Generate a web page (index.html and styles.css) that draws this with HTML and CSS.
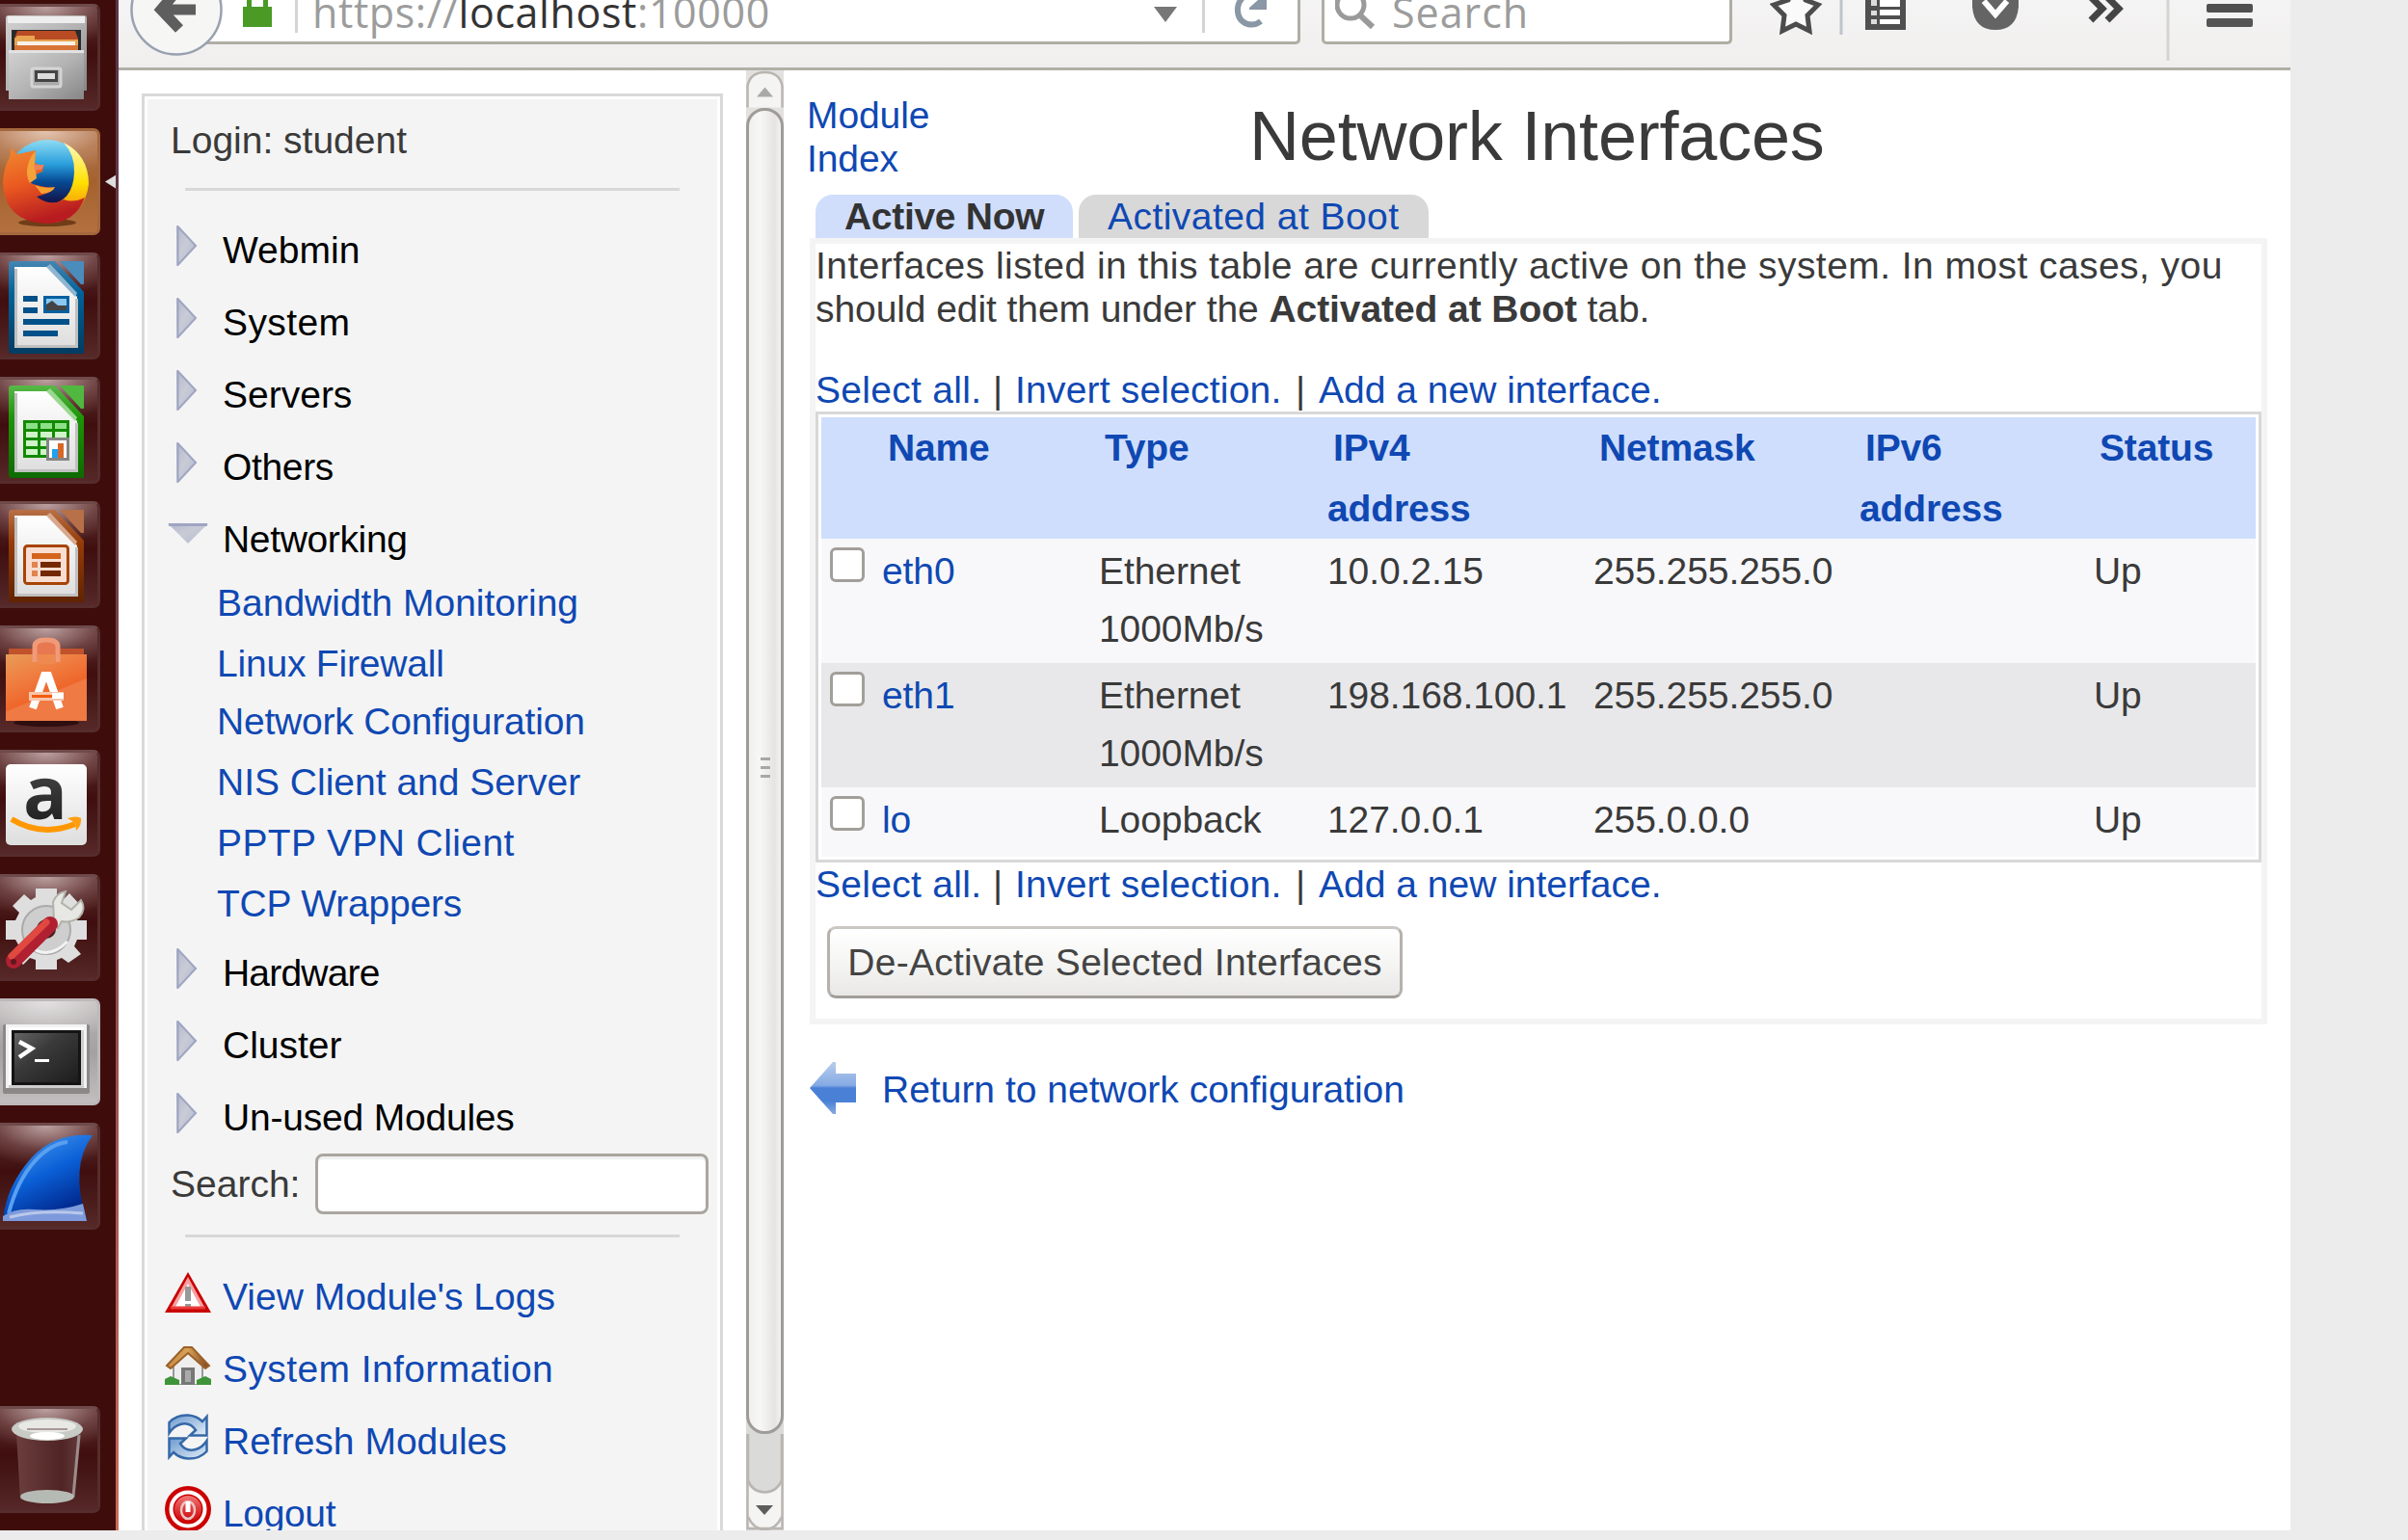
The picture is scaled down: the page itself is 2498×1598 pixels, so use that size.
FILE: index.html
```html
<!DOCTYPE html>
<html lang="en">
<head>
<meta charset="utf-8">
<title>Network Interfaces</title>
<link rel="stylesheet" href="styles.css">
</head>
<body>
<svg width="0" height="0" class="defs">
  <defs>
    <linearGradient id="metal" x1="0" y1="0" x2="1" y2="1"><stop offset="0" stop-color="#d2d2d2"/><stop offset=".5" stop-color="#b4b4b4"/><stop offset="1" stop-color="#868686"/></linearGradient>
    <linearGradient id="paper" x1="0" y1="0" x2="0" y2="1"><stop offset="0" stop-color="#fff"/><stop offset="1" stop-color="#dedede"/></linearGradient>
    <linearGradient id="blueDoc" x1="0" y1="0" x2="0" y2="1"><stop offset="0" stop-color="#4585b2"/><stop offset=".35" stop-color="#00629a"/><stop offset="1" stop-color="#003c62"/></linearGradient>
    <linearGradient id="greenDoc" x1="0" y1="0" x2="0" y2="1"><stop offset="0" stop-color="#58b848"/><stop offset=".35" stop-color="#1d9408"/><stop offset="1" stop-color="#0d6a00"/></linearGradient>
    <linearGradient id="brownDoc" x1="0" y1="0" x2="0" y2="1"><stop offset="0" stop-color="#b87048"/><stop offset=".35" stop-color="#963c08"/><stop offset="1" stop-color="#602400"/></linearGradient>
    <linearGradient id="globe" x1="0" y1="0" x2="0" y2="1"><stop offset="0" stop-color="#8fdcf4"/><stop offset=".3" stop-color="#2a9fdc"/><stop offset=".52" stop-color="#064a94"/><stop offset=".75" stop-color="#141850"/></linearGradient>
    <linearGradient id="fox" x1="0" y1="0" x2=".3" y2="1"><stop offset="0" stop-color="#f08a30"/><stop offset=".5" stop-color="#ea5a20"/><stop offset="1" stop-color="#b81c20"/></linearGradient>
    <linearGradient id="tail" x1="0" y1="0" x2="0" y2="1"><stop offset="0" stop-color="#fffbc0"/><stop offset=".5" stop-color="#ffe000"/><stop offset="1" stop-color="#f07018"/></linearGradient>
    <linearGradient id="bag" x1="0" y1="0" x2=".5" y2="1"><stop offset="0" stop-color="#e89c58"/><stop offset=".4" stop-color="#f07c40"/><stop offset=".68" stop-color="#ee662a"/><stop offset=".7" stop-color="#f07a44"/></linearGradient>
    <linearGradient id="letterA" x1="0" y1="0" x2="0" y2="1"><stop offset="0" stop-color="#555"/><stop offset="1" stop-color="#161616"/></linearGradient>
    <linearGradient id="screen" x1="0" y1="0" x2="1" y2="1"><stop offset="0" stop-color="#666"/><stop offset=".4" stop-color="#3a3a3a"/><stop offset="1" stop-color="#1c1c1c"/></linearGradient>
    <linearGradient id="fin" x1="0" y1="0" x2=".5" y2="1"><stop offset="0" stop-color="#88bdf2"/><stop offset=".3" stop-color="#2c7fe4"/><stop offset=".55" stop-color="#0a5fd6"/><stop offset="1" stop-color="#00268a"/></linearGradient>
    <linearGradient id="tri" x1="0" y1="0" x2="1" y2="1"><stop offset="0" stop-color="#b2b6cb"/><stop offset=".45" stop-color="#c9ccd6"/><stop offset="1" stop-color="#b2b6cb"/></linearGradient>
    <linearGradient id="back" x1="0" y1="0" x2="0" y2="1"><stop offset="0" stop-color="#b8cdec"/><stop offset=".45" stop-color="#85aae4"/><stop offset=".5" stop-color="#4a80d6"/><stop offset=".75" stop-color="#4a80d6"/><stop offset="1" stop-color="#87aae0"/></linearGradient>
    <linearGradient id="roof" x1="0" y1="0" x2="1" y2="0"><stop offset="0" stop-color="#c68c44"/><stop offset=".5" stop-color="#d8a258"/><stop offset="1" stop-color="#7a4420"/></linearGradient>
    <linearGradient id="swirl" x1="0" y1="0" x2="1" y2="1"><stop offset="0" stop-color="#6c9ace"/><stop offset="1" stop-color="#e2ecf8"/></linearGradient>
    <linearGradient id="power" x1="0" y1="0" x2="0" y2="1"><stop offset="0" stop-color="#f07474"/><stop offset="1" stop-color="#cc0000"/></linearGradient>
    <linearGradient id="glass" x1="0" y1="0" x2="1" y2="0"><stop offset="0" stop-color="#6c3e3e"/><stop offset=".7" stop-color="#502424"/><stop offset="1" stop-color="#643c3c"/></linearGradient>
    <symbol id="arrow-right" viewBox="0 0 48 42"><path d="M12 0 33 21 12 42Z" fill="url(#tri)"/><path d="M13.500 1V41L32 21Z" fill="none" stroke="#9fa5c2" stroke-width="2"/></symbol>
    <symbol id="arrow-down" viewBox="0 0 48 21"><path d="M3 0H45L24 21Z" fill="url(#tri)"/><path d="M4 1.500H44" stroke="#9fa5c2" stroke-width="3"/></symbol>
  </defs>
</svg>
<div class="desktop">
  <nav class="launcher">
    <div class="tile">
      <svg viewBox="0 0 105 111">
        <path d="M9 12H87V93H9Z" fill="#aaa"/><path d="M6 15Q6 12 9 12H87Q90 12 90 15V90H6Z" fill="url(#metal)"/><path d="M8 13H88V20H8Z" fill="#eee"/>
        <path d="M12 27H84V50H12Z" fill="#2a2a2a"/><path d="M18 28H78L81 36V48H15V36Z" fill="#b84a24"/><path d="M18 33H36V37H81V48H15V36Z" fill="#e8a450"/><path d="M18 39H78V43H18Z" fill="#f8f2ea"/><path d="M15 43H81V48H15Z" fill="#d87436"/>
        <path d="M9 48H87V99H9Z" fill="url(#metal)"/><path d="M9 48H87V51H9Z" fill="#e2e2e2"/>
        <rect x="33" y="67" width="30" height="19" rx="2" fill="#aaa" stroke="#d4d4d4" stroke-width="3"/><rect x="37.500" y="70.500" width="21" height="9" fill="#ddd" stroke="#444" stroke-width="3"/>
      </svg>
    </div>
    <div class="tile firefox">
      <svg viewBox="0 0 105 111">
        <ellipse cx="49" cy="98" rx="30" ry="4" fill="#6f3d17"/>
        <circle cx="49" cy="54" r="42" fill="url(#globe)"/>
        <path d="M66 15Q92 28 92 58Q88 90 58 98L50 80Q76 76 77 46Q78 28 66 15Z" fill="url(#tail)"/>
        <path d="M12 20Q15 25 18 27Q27 25 37 23L36 36L45 40L44 45L35 49L31 56Q36 60 56 62Q54 67 38 71Q52 82 66 74Q76 78 88 72Q78 99 48 99Q4 97 3 56Q4 40 10 30Z" fill="url(#fox)"/>
        <path d="M33 28 37 24 36 37 38 52 31 57Q24 45 33 28Z" fill="#f3a33a"/><path d="M36 59Q45 63 57 61Q55 67 43 68Z" fill="#f6a032"/><path d="M35 38H46L43 43L36 44Z" fill="#ef8058"/>
      </svg>
    </div>
    <div class="tile">
      <svg viewBox="0 0 105 111">
        <path d="M12 9H57L87 41V105H12Q9 105 9 102V12Q9 9 12 9Z" fill="url(#blueDoc)"/><path d="M15 15H50L80 46V98H15Z" fill="url(#paper)"/><path d="M16.500 17V97.500H79.500V48" fill="none" stroke="#c0c0c0" stroke-width="3"/><path d="M52 12 80 42 78 46 48 15Z" fill="#8fb6d0"/><path d="M62 9H87V33H84Z" fill="#4a8cbc"/>
        <path d="M24 45H39V51H24ZM24 57H39V63H24ZM24 69H72V75H24ZM24 81H60V87H24Z" fill="#00508a"/><rect x="46.500" y="46.500" width="24" height="15" fill="#8cc8f0" stroke="#0060a0" stroke-width="3"/><path d="M48 54 54 50 60 55H69V60H48Z" fill="#444"/>
      </svg>
    </div>
    <div class="tile">
      <svg viewBox="0 0 105 111">
        <path d="M12 9H57L87 41V105H12Q9 105 9 102V12Q9 9 12 9Z" fill="url(#greenDoc)"/><path d="M15 15H50L80 46V98H15Z" fill="url(#paper)"/><path d="M16.500 17V97.500H79.500V48" fill="none" stroke="#c0c0c0" stroke-width="3"/><path d="M52 12 80 42 78 46 48 15Z" fill="#9ad890"/><path d="M62 9H87V33H84Z" fill="#50b840"/>
        <path d="M24 45H72V84H24Z" fill="#128a00"/><path d="M27 48H39V54H27ZM42 48H54V54H42ZM57 48H69V54H57Z" fill="#8ee088"/><path d="M27 57H39V63H27ZM42 57H54V63H42ZM57 57H69V63H57ZM27 66H39V72H27ZM42 66H54V72H42ZM27 75H39V81H27ZM42 75H54V81H42Z" fill="#cef4c8"/><rect x="49.500" y="64.500" width="21" height="21" fill="#fff" stroke="#858585" stroke-width="3"/><path d="M54 75H60V84H54Z" fill="#20a0f0"/><path d="M60 69H66V84H60Z" fill="#d86828"/>
      </svg>
    </div>
    <div class="tile">
      <svg viewBox="0 0 105 111">
        <path d="M12 9H57L87 41V105H12Q9 105 9 102V12Q9 9 12 9Z" fill="url(#brownDoc)"/><path d="M15 15H50L80 46V98H15Z" fill="url(#paper)"/><path d="M16.500 17V97.500H79.500V48" fill="none" stroke="#c0c0c0" stroke-width="3"/><path d="M52 12 80 42 78 46 48 15Z" fill="#d8a88c"/><path d="M62 9H87V33H84Z" fill="#b87048"/>
        <rect x="25.500" y="46.500" width="45" height="39" rx="3" fill="#f8ddd0" stroke="#a84408" stroke-width="3"/><path d="M33 54H63V60H33Z" fill="#d4641c"/><path d="M33 63H39V69H33ZM33 72H39V78H33Z" fill="#e08450"/><path d="M42 63H63V69H42ZM42 72H63V78H42Z" fill="#742800"/>
      </svg>
    </div>
    <div class="tile">
      <svg viewBox="0 0 105 111">
        <ellipse cx="48" cy="101" rx="34" ry="4" fill="#2e0e0e"/><path d="M9 24H87V33H9Z" fill="#c0522c"/><path d="M6 30H90V99H6Z" fill="url(#bag)"/>
        <path d="M36 38V24Q36 15 48 15Q60 15 60 24V38" fill="#e87850"/><path d="M36 38V22Q36 15 48 15Q60 15 60 22V38" fill="none" stroke="#f09a78" stroke-width="5"/><path d="M39 30H57V40H39Z" fill="#ee8a50"/>
        <path d="M34 86 46 52H50L62 86" fill="none" stroke="#fff" stroke-width="8"/><path d="M30 69H66V78H30Z" fill="#f7c5ab"/><path d="M33 72H54V75H33Z" fill="#f45c10"/><path d="M54 70H66V76H54Z" fill="#fff"/>
      </svg>
    </div>
    <div class="tile">
      <svg viewBox="0 0 105 111">
        <rect x="6" y="15" width="84" height="84" rx="5" fill="url(#paper)"/>
        <text x="47" y="72" text-anchor="middle" class="amazon-letter" fill="url(#letterA)">a</text>
        <path d="M12 72Q43 91 78 77" fill="none" stroke="#ff9800" stroke-width="6"/><path d="M70 71Q80 68 84 71Q85 78 79 84L78 76Z" fill="#ff9d10"/>
      </svg>
    </div>
    <div class="tile">
      <svg viewBox="0 0 105 111">
        <path d="M37 15H59V24L65 27L72 20L84 33L77 41L80 48H90V68H80L77 75L84 83L71 92L64 87L59 89V99H37V89L31 87L24 94L13 82L20 75L16 68H6V48H16L20 40L13 33L25 21L32 27L37 24Z" fill="#dedede"/>
        <circle cx="48" cy="58" r="25" fill="#cecece" stroke="#aaa" stroke-width="2"/><path d="M28 72Q48 92 70 70" fill="none" stroke="#f3f3f3" stroke-width="3"/><circle cx="48" cy="57" r="10" fill="#4a2020"/>
        <path d="M56 49 55 29Q59 19 68 18L64 30L74 37L84 27Q90 36 82 45Q73 51 64 49L60 56Z" fill="#e7e8e3" stroke="#b2b2aa" stroke-width="2"/>
        <path d="M14 90 52 52" stroke="#b02030" stroke-width="16" stroke-linecap="round"/><path d="M12 85 48 50" stroke="#e04840" stroke-width="7" stroke-linecap="round"/><circle cx="14" cy="91" r="3" fill="#601820"/>
      </svg>
    </div>
    <div class="tile terminal">
      <svg viewBox="0 0 105 111">
        <rect x="3" y="27" width="90" height="72" rx="2" fill="#8b8888"/><rect x="6" y="27" width="84" height="66" fill="#f2f2f2"/><path d="M9 30H87V93H9Z" fill="#cfcdcd"/><path d="M9 30H87V33H12V90H9Z" fill="#fff"/>
        <rect x="13.500" y="34.500" width="69" height="54" fill="url(#screen)" stroke="#141414" stroke-width="3"/><path d="M20 45 33 52 20 61" fill="none" stroke="#fff" stroke-width="4.500"/><path d="M36 63H51V66H36Z" fill="#fff"/>
      </svg>
    </div>
    <div class="tile">
      <svg viewBox="0 0 105 111">
        <path d="M3 102Q6 66 33 36Q57 10 96 13Q72 45 90 102Z" fill="url(#fin)"/><path d="M9 94Q18 60 36 40Q52 22 70 20" fill="none" stroke="#5aa0f0" stroke-width="4"/><path d="M3 102V97Q16 88 36 90Q62 92 86 84L90 102Z" fill="#7d9bdc"/><path d="M10 98Q40 90 86 94" fill="none" stroke="#b9c7ea" stroke-width="3"/>
      </svg>
    </div>
    <div class="tile trash">
      <svg viewBox="0 0 105 111">
        <path d="M17 28H84L77 97H21Z" fill="url(#glass)"/><path d="M82 30 76 94" stroke="#9c8c8c" stroke-width="3"/><ellipse cx="49" cy="94" rx="28" ry="7" fill="#b6bab4"/><ellipse cx="49" cy="24" rx="37" ry="12" fill="#c8cac6"/><ellipse cx="49" cy="21" rx="30" ry="7" fill="#e8e8e4"/><path d="M28 24H70" stroke="#a89898" stroke-width="2"/><ellipse cx="49" cy="31" rx="18" ry="4" fill="#fff"/>
      </svg>
    </div>
    <svg class="running" viewBox="0 0 12 15"><path d="M0 7.500 12 0V15Z" fill="#dedede"/></svg>
  </nav>

  <div class="browser">
    <header class="toolbar">
      <svg class="back-button" viewBox="0 0 96 58"><ellipse cx="48" cy="10" rx="46.500" ry="46.500" fill="#f6f6f5" stroke="#98a2b0" stroke-width="2.500"/><path d="M33 10H68M49 -10 32 10 51 30" fill="none" stroke="#5e5e5e" stroke-width="11"/></svg>
      <div class="url-bar">
        <svg class="lock" viewBox="0 0 30 28"><path d="M0 7H4V-2H26V7H30V28H0ZM9 7H21V0H9Z" fill="#4b9a26"/></svg>
        <span class="sep"></span>
        <span class="url">https://<b>localhost</b>:10000</span>
        <svg class="drop" viewBox="0 0 24 16"><path d="M0 0H24L12 16Z" fill="#777"/></svg>
        <span class="sep"></span>
        <svg class="reload" viewBox="0 0 34 30"><path d="M28 22Q22 27 14 25Q3 21 4 8Q5 0 12 -5H24" fill="none" stroke="#8a97a5" stroke-width="6"/><path d="M16 8 34 -8V10H16Z" fill="#8a97a5"/></svg>
      </div>
      <div class="search-bar">
        <svg class="glass" viewBox="0 0 44 31"><circle cx="16" cy="5" r="14" fill="none" stroke="#9a9a9a" stroke-width="5"/><path d="M25 15 39 28" stroke="#9a9a9a" stroke-width="6"/></svg>
        <span>Search</span>
      </div>
      <svg class="tools" viewBox="0 0 538 70">
        <path d="M4 5 19 0 28 -18 37 0 50 5 39 16 41 32 27 25 13 32 15 16Z" fill="#fafafa" stroke="#4c4c4c" stroke-width="5"/>
        <path d="M74 0V36" stroke="#bcc5cd" stroke-width="3"/>
        <path d="M99 -3H141V31H99Z" fill="#505050"/><path d="M105 0H111V6H105ZM105 11H111V16H105ZM105 20H111V25H105Z" fill="#ddd"/><path d="M114 0H135V7H114ZM114 10H135V16H114ZM114 20H135V25H114Z" fill="#fff"/>
        <path d="M210 -6H258V7Q256 31 234 31Q212 31 210 7Z" fill="#646464"/><path d="M222 1 234 15 246 1" fill="none" stroke="#fff" stroke-width="6"/>
        <path d="M333 -3 345 9 333 21M350 -3 362 9 350 21" fill="none" stroke="#444" stroke-width="7"/>
        <path d="M413 0V63" stroke="#d4d4d2" stroke-width="3"/>
        <rect x="453" y="4" width="48" height="9" rx="2" fill="#505050"/><rect x="453" y="19" width="48" height="9" rx="2" fill="#555"/>
      </svg>
    </header>

    <div class="frames">
      <aside class="side">
        <div class="side-box">
          <div class="login">Login: student</div>
          <div class="rule"></div>
          <ul class="cats">
            <li><svg class="ar"><use href="#arrow-right"/></svg>Webmin</li>
            <li class="wide"><svg class="ar"><use href="#arrow-right"/></svg>System</li>
            <li><svg class="ar"><use href="#arrow-right"/></svg>Servers</li>
            <li class="narrow"><svg class="ar"><use href="#arrow-right"/></svg>Others</li>
            <li class="narrow"><svg class="ad"><use href="#arrow-down"/></svg>Networking</li>
          </ul>
          <ul class="subs">
            <li>Bandwidth Monitoring</li>
            <li class="snug">Linux Firewall</li>
            <li class="tight snug">Network Configuration</li>
            <li>NIS Client and Server</li>
            <li class="wide">PPTP VPN Client</li>
            <li class="snug">TCP Wrappers</li>
          </ul>
          <ul class="cats">
            <li class="narrower"><svg class="ar"><use href="#arrow-right"/></svg>Hardware</li>
            <li><svg class="ar"><use href="#arrow-right"/></svg>Cluster</li>
            <li class="snug"><svg class="ar"><use href="#arrow-right"/></svg>Un-used Modules</li>
          </ul>
          <div class="find"><span>Search:</span><input type="text" aria-label="Search"></div>
          <div class="rule low"></div>
          <ul class="cats links">
            <li><svg class="ic-logs" viewBox="0 0 48 42"><path d="M24 0 48 42H0Z" fill="#c80000"/><path d="M24 5 41 36H7Z" fill="#f8a0a0"/><path d="M24 12 37 36H11Z" fill="#fff"/><path d="M21 15H27V30H21ZM21 33H27V36H21Z" fill="#999"/><path d="M6 37H42" stroke="#ec3c3c" stroke-width="3"/></svg>View Module's Logs</li>
            <li class="wide"><svg class="ic-logs" viewBox="0 0 48 42"><path d="M9 21 24 8 39 21V42H9Z" fill="#eee" stroke="#999" stroke-width="2"/><path d="M17 24H31V42H17Z" fill="#777"/><path d="M21 27H27V39H21Z" fill="#aaa"/><path d="M2 22 20 3H28L46 22L42 25L24 9L6 25Z" fill="url(#roof)" stroke="#9c6028" stroke-width="2"/><path d="M0 42V36L6 33L15 37V42ZM33 42V37L42 33L48 36V42Z" fill="#3f943a"/></svg>System Information</li>
            <li><svg class="ic-refresh" viewBox="0 0 48 48"><path d="M4.500 20V9Q12 1 24 1.500Q33 2 39 8L43.500 3V22.500H26L32 17Q26 8 16 11Q9 13 4.500 20Z" fill="url(#swirl)" stroke="#3568a8" stroke-width="2.500"/><path d="M43.500 28V39Q36 47 24 46.500Q15 46 9 40L4.500 45V25.500H22L16 31Q22 40 32 37Q39 35 43.500 28Z" fill="url(#swirl)" stroke="#3568a8" stroke-width="2.500"/></svg>Refresh Modules</li>
            <li class="narrow"><svg class="ic-out" viewBox="0 0 48 48"><circle cx="24" cy="24" r="24" fill="#cc0000"/><circle cx="24" cy="24" r="17.500" fill="none" stroke="#fff" stroke-width="4"/><circle cx="24" cy="24" r="14" fill="url(#power)"/><ellipse cx="24" cy="25" rx="7" ry="9" fill="none" stroke="#e8c4c4" stroke-width="2.500"/><path d="M24 16V27" stroke="#fff" stroke-width="5"/></svg>Logout</li>
          </ul>
        </div>
      </aside>

      <div class="scroll">
        <svg class="cap" viewBox="0 0 39 38"><path d="M1.500 38V16Q4 1.500 19.500 1.500Q35 1.500 37.500 16V38" fill="#f4f4f3" stroke="#b9b5b0" stroke-width="2.500"/><path d="M11 27 19.500 17 28 27Z" fill="#a9a9a9"/></svg>
        <div class="thumb"><i></i><i></i><i></i></div>
        <svg class="foot" viewBox="0 0 39 100"><path d="M1.500 0V98H37.500V0" fill="#f4f4f3" stroke="#b9b5b0" stroke-width="2.500"/><path d="M2 -4V48Q6 60 19.500 60.500Q32 60 37 48V-4" fill="#dadad9" stroke="#b9b5b0" stroke-width="2.500"/><path d="M2 86Q8 99 19.500 99Q31 99 37 86" fill="none" stroke="#b9b5b0" stroke-width="2.500"/><path d="M10 74H28L19 84Z" fill="#5e5e5e"/></svg>
      </div>

      <main class="page">
        <div class="heading">
          <a class="module">Module<br>Index</a>
          <h1>Network Interfaces</h1>
        </div>
        <div class="tabs"><span class="tab on">Active Now</span><span class="tab">Activated at Boot</span></div>
        <section class="panel">
          <p class="intro"><span>Interfaces listed in this table are currently active on the system. In most cases, you</span><br>should edit them under the <b>Activated at Boot</b> tab.</p>
          <div class="actions"><a>Select all.</a><i>|</i><a>Invert selection.</a><i>|</i><a>Add a new interface.</a></div>
          <div class="table">
            <div class="tr th"><span></span><span>Name</span><span>Type</span><span>IPv4<br>address</span><span>Netmask</span><span>IPv6<br>address</span><span>Status</span></div>
            <div class="tr"><input type="checkbox" aria-label="eth0"><a>eth0</a><span>Ethernet<br>1000Mb/s</span><span>10.0.2.15</span><span>255.255.255.0</span><span></span><span>Up</span></div>
            <div class="tr alt"><input type="checkbox" aria-label="eth1"><a>eth1</a><span>Ethernet<br>1000Mb/s</span><span>198.168.100.1</span><span>255.255.255.0</span><span></span><span>Up</span></div>
            <div class="tr short"><input type="checkbox" aria-label="lo"><a>lo</a><span>Loopback</span><span>127.0.0.1</span><span>255.0.0.0</span><span></span><span>Up</span></div>
          </div>
          <div class="actions second"><a>Select all.</a><i>|</i><a>Invert selection.</a><i>|</i><a>Add a new interface.</a></div>
          <button class="deactivate">De-Activate Selected Interfaces</button>
        </section>
        <div class="return"><svg viewBox="0 0 48 54"><path d="M0 27 24 0H27V12H48V42H27V54H24Z" fill="url(#back)"/></svg><a>Return to network configuration</a></div>
      </main>
    </div>
  </div>
</div>
</body>
</html>
```
FILE: styles.css
```css
* { box-sizing: border-box; }
html, body { margin: 0; height: 100%; }
body {
  background: #ececec;
  color: #3a3a3a;
  font-family: "Liberation Sans", Arial, sans-serif;
  font-size: 39px;
  line-height: 45px;
  overflow: hidden;
}
svg { display: block; flex: none; }
ul { list-style: none; margin: 0; padding: 0; }
p { margin: 0; }
a { color: #0f48b3; }
.defs { position: absolute; }

.desktop { display: flex; width: 2376px; height: 1588px; overflow: hidden; }

/* launcher */
.launcher {
  position: relative;
  flex: none;
  display: flex;
  flex-direction: column;
  gap: 18px;
  width: 123px;
  padding-top: 4px;
  background: #3f0c0c;
  border-right: 3px solid;
  border-image: linear-gradient(#5a3545, #7b434b 50%, #c96b58) 1;
}
.tile {
  flex: none;
  width: 104px;
  height: 111px;
  border-radius: 0 7px 7px 0;
  border: 3px solid #562c2c;
  border-left: 0;
  border-top-color: #6f4a4a;
  background:
    radial-gradient(ellipse 85px 42px at 48px 0, rgba(205, 180, 180, .85), rgba(160, 120, 120, .35) 60%, transparent),
    linear-gradient(#5c3030, #400e0e 45%, #4a1c1c 75%, #562828);
}
.tile svg { width: 105px; height: 111px; margin-top: -3px; }
.tile.firefox {
  background: radial-gradient(ellipse 95px 45px at 48px 0, #e4c4b0, rgba(200, 150, 115, .5) 60%, transparent), linear-gradient(#ae7550, #a5622f 50%, #b3713f);
  border-color: #a4673d;
}
.tile.terminal {
  background: radial-gradient(ellipse 85px 40px at 48px 0, #e2e0e0, transparent), linear-gradient(#b9b5b6, #a5a0a1 50%, #c2bebf);
  border-color: #bdb8b9;
}
.tile.trash { margin-top: 165px; }
.running { position: absolute; left: 109px; top: 181px; width: 11px; height: 15px; }
.amazon-letter { font: bold 76px "Open Sans", sans-serif; }

/* browser chrome */
.browser { flex: 1; min-width: 0; display: flex; flex-direction: column; background: #fff; }
.toolbar {
  position: relative;
  flex: none;
  display: flex;
  height: 73px;
  border-bottom: 3px solid #b1b0a6;
  background: linear-gradient(#f5f4f4, #f0efee);
  font-family: "Open Sans", sans-serif;
  font-size: 43px;
  line-height: 46px;
}
.back-button { position: relative; z-index: 1; width: 96px; height: 58px; margin-left: 12px; }
.url-bar, .search-bar {
  display: flex;
  height: 46px;
  background: #fff;
  border: 3px solid #b0aea5;
  border-top: 0;
  border-radius: 0 0 5px 5px;
}
.url-bar { width: 1164px; margin-left: -46px; padding-left: 61px; }
.lock { width: 30px; height: 28px; margin-left: 3px; }
.sep { width: 3px; height: 34px; margin-left: 24px; background: #d4d4d4; flex: none; }
.url { flex: none; width: 873px; margin: -10px 0 0 15px; color: #9c9c9c; white-space: nowrap; letter-spacing: .6px; }
.url b { font-weight: 400; color: #333; }
.drop { width: 24px; height: 16px; margin-top: 7px; }
.drop + .sep { margin-left: 26px; }
.reload { width: 34px; height: 30px; margin-left: 30px; }
.search-bar { width: 426px; margin-left: 22px; padding-left: 11px; color: #9c9c9c; }
.search-bar span { margin: -10px 0 0 15px; letter-spacing: 1px; }
.glass { width: 44px; height: 31px; }
.tools { width: 538px; height: 70px; margin-left: 39px; }

.frames { flex: 1; min-height: 0; display: flex; }

/* left frame */
.side { flex: none; width: 651px; padding: 24px 24px 0; overflow: hidden; height: 1515px; }
.side-box {
  height: 1600px;
  padding: 5px 9px 0 24px;
  border: 3px solid #d9d9d9;
  box-shadow: inset 0 0 0 3px #fff;
  background: #f4f4f4;
  width: 603px;
}
.login { line-height: 75px; padding: 3px 0 0 3px; }
.rule { width: 513px; height: 3px; margin: 12px 0 24px 18px; background: #d8d8d8; }
.rule.low { margin-top: 21px; }
.cats { margin-left: -3px; color: #000; line-height: 75px; }
.cats li { display: flex; height: 75px; white-space: nowrap; }
.cats svg { width: 48px; margin-right: 12px; }
.cats .ar { height: 42px; margin-top: 12px; }
.cats .ad { height: 21px; margin-top: 21px; }
.cats .ic-logs { height: 42px; margin-top: 12px; }
.cats .ic-refresh { height: 48px; margin-top: 9px; }
.cats .ic-out { height: 48px; margin-top: 9px; }
.links { color: #0f48b3; }
.wide { letter-spacing: .4px; }
.snug { letter-spacing: -.2px; }
.narrow { letter-spacing: -.35px; }
.narrower { letter-spacing: -.8px; }
.subs { margin: -3px 0 3px 51px; color: #0f48b3; line-height: 63px; white-space: nowrap; }
.subs .tight { margin-top: -3px; }
.find { display: flex; height: 63px; padding-left: 3px; margin-right: 3px; line-height: 63px; }
.find input {
  width: 408px;
  height: 63px;
  margin: 0 0 0 auto;
  border: 3px solid #aaa69f;
  border-radius: 8px;
  background: #fff;
  box-shadow: inset 0 3px #f0f0f0;
}

/* scroll bar */
.scroll { flex: none; display: flex; flex-direction: column; width: 39px; height: 1515px; background: linear-gradient(#e2e1df, #e2e1df 1300px, #dadad9 1300px); }
.cap { width: 39px; height: 39px; }
.thumb {
  display: flex;
  flex-direction: column;
  align-items: center;
  justify-content: center;
  gap: 6px;
  height: 1376px;
  padding-bottom: 8px;
  border: 3px solid #9f9b97;
  border-radius: 19px;
  background: linear-gradient(90deg, #f0f0ef, #f7f7f6 35%, #e5e4e2 80%, #f2f2f1);
}
.thumb i { width: 10px; height: 3px; background: #aaa7a3; }
.foot { width: 39px; height: 100px; }

/* right frame */
.page { flex: 1; min-width: 0; padding: 24px 24px 0 24px; }
.heading { display: flex; height: 105px; }
.module { width: 459px; letter-spacing: -.1px; }
h1 { margin: 8px 0 0; font-weight: 400; font-size: 72px; line-height: 72px; letter-spacing: -.2px; white-space: nowrap; }
.tabs { display: flex; gap: 6px; height: 45px; margin-left: 9px; }
.tab { width: 363px; padding-left: 30px; border-radius: 18px 18px 0 0; background: #d8d8d8; color: #0f48b3; letter-spacing: .45px; white-space: nowrap; }
.tab.on { width: 267px; background: #d0defc; color: #333; font-weight: 700; letter-spacing: -.3px; }
.panel { width: 1512px; height: 816px; margin-left: 3px; border: 6px solid #f4f4f4; }
.intro { letter-spacing: -.08px; white-space: nowrap; }
.intro span { letter-spacing: .44px; }
.actions { display: flex; margin-top: 39px; white-space: nowrap; }
.actions.second { margin-top: 0; }
.actions a:first-child { width: 171px; letter-spacing: .3px; }
.actions a:nth-child(3) { width: 277px; letter-spacing: .2px; }
.actions i { width: 38px; font-style: normal; text-align: center; }
.actions i:nth-child(2) { width: 36px; }
.table { width: 1500px; height: 468px; padding: 3px; border: 3px solid #d8d8d8; }
.tr {
  display: grid;
  grid-template-columns: 63px 225px 237px 276px 276px 243px 1fr;
  align-content: start;
  height: 129px;
  padding-top: 4px;
  background: #f8f8fa;
  line-height: 60px;
  letter-spacing: -.08px;
  white-space: nowrap;
}
.tr.th { height: 126px; padding-top: 0; background: #cfdefc; color: #0f48b3; font-weight: 700; line-height: 63px; letter-spacing: -.15px; }
.tr.th span { text-indent: 6px; }
.tr.alt { background: #e8e8ea; }
.tr.short { height: 72px; }
.tr input {
  appearance: none;
  width: 36px;
  height: 36px;
  margin: 5px 0 0 9px;
  border: 3px solid #a29e99;
  border-radius: 6px;
  background: #fff;
}
.deactivate {
  display: block;
  width: 597px;
  height: 75px;
  margin: 21px 0 0 12px;
  padding: 0;
  border: 3px solid;
  border-color: #cbc8c4 #b5b1ac #a19d99;
  border-radius: 9px;
  background: linear-gradient(#fff, #f5f5f4 50%, #e9e8e7);
  color: #444;
  font: 39px "Liberation Sans", Arial, sans-serif;
  letter-spacing: .26px;
  white-space: nowrap;
}
.return { display: flex; gap: 27px; margin: 39px 0 0 3px; line-height: 57px; }
.return svg { width: 48px; height: 54px; }
```
